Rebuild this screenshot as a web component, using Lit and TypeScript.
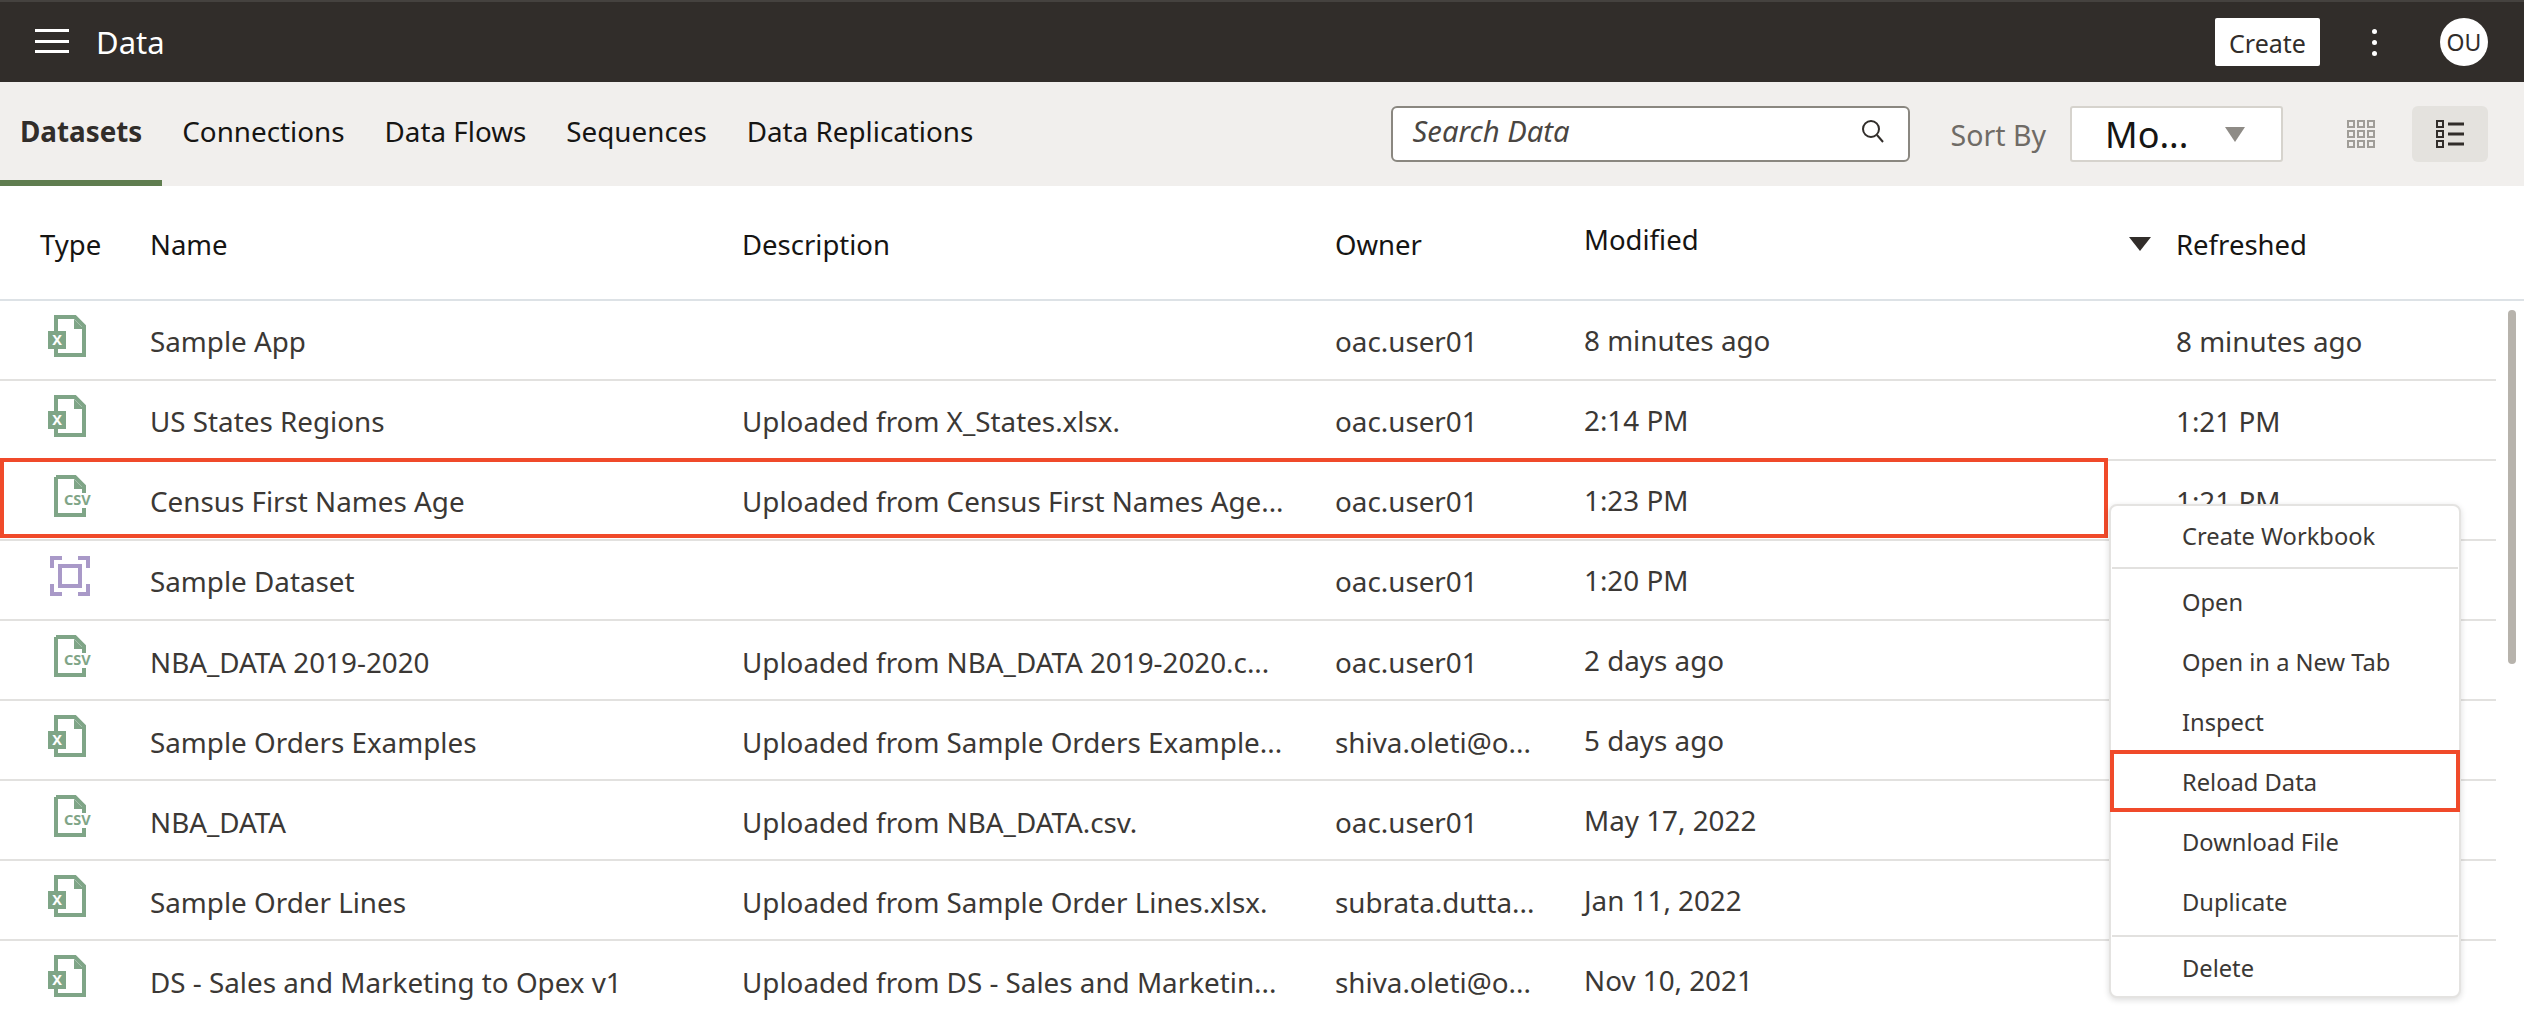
import { LitElement, html, css, svg } from "lit";
import { customElement } from "lit/decorators.js";

type Kind = "xls" | "csv" | "set";

const rows: { kind: Kind; name: string; desc: string; owner: string; modified: string; refreshed: string; marked?: boolean }[] = [
  { kind: "xls", name: "Sample App", desc: "", owner: "oac.user01", modified: "8 minutes ago", refreshed: "8 minutes ago" },
  { kind: "xls", name: "US States Regions", desc: "Uploaded from X_States.xlsx.", owner: "oac.user01", modified: "2:14 PM", refreshed: "1:21 PM" },
  { kind: "csv", name: "Census First Names Age", desc: "Uploaded from Census First Names Age...", owner: "oac.user01", modified: "1:23 PM", refreshed: "1:21 PM", marked: true },
  { kind: "set", name: "Sample Dataset", desc: "", owner: "oac.user01", modified: "1:20 PM", refreshed: "" },
  { kind: "csv", name: "NBA_DATA 2019-2020", desc: "Uploaded from NBA_DATA 2019-2020.c...", owner: "oac.user01", modified: "2 days ago", refreshed: "" },
  { kind: "xls", name: "Sample Orders Examples", desc: "Uploaded from Sample Orders Example...", owner: "shiva.oleti@o...", modified: "5 days ago", refreshed: "" },
  { kind: "csv", name: "NBA_DATA", desc: "Uploaded from NBA_DATA.csv.", owner: "oac.user01", modified: "May 17, 2022", refreshed: "" },
  { kind: "xls", name: "Sample Order Lines", desc: "Uploaded from Sample Order Lines.xlsx.", owner: "subrata.dutta...", modified: "Jan 11, 2022", refreshed: "" },
  { kind: "xls", name: "DS - Sales and Marketing to Opex v1", desc: "Uploaded from DS - Sales and Marketin...", owner: "shiva.oleti@o...", modified: "Nov 10, 2021", refreshed: "" },
];

const GREEN = "#7fa587";
const PURPLE = "#a999c8";

const typeIcon = (kind: Kind) => {
  if (kind === "set") {
    return svg`<svg class="type" viewBox="0 0 44 42" fill="none" stroke="${PURPLE}" stroke-width="4">
      <path d="M14 3H4v10M30 3h10v10M4 29v10h10M40 29v10H30" />
      <rect x="12" y="11" width="20" height="20" />
    </svg>`;
  }
  if (kind === "csv") {
    return svg`<svg class="type" viewBox="0 0 44 42">
      <path d="M8 2h19l9 9v7M36 33v7H8V2" fill="none" stroke="${GREEN}" stroke-width="4" />
      <path d="M26 4l10 10h-10z" fill="${GREEN}" />
      <text x="16" y="30" font-family="Noto Sans, sans-serif" font-size="14.5" font-weight="700" fill="${GREEN}">CSV</text>
    </svg>`;
  }
  return svg`<svg class="type" viewBox="0 0 44 42">
    <path d="M8 2h19l9 9v29H8z" fill="none" stroke="${GREEN}" stroke-width="4" />
    <path d="M26 4l10 10h-10z" fill="${GREEN}" />
    <rect x="0" y="16" width="18" height="18" fill="${GREEN}" />
    <text x="9" y="30" text-anchor="middle" font-family="Noto Sans, sans-serif" font-size="14.5" font-weight="700" fill="#fff">X</text>
  </svg>`;
};

@customElement("app-root")
export class AppRoot extends LitElement {
  static styles = css`
    :host {
      display: block;
      position: relative;
      width: 2524px;
      height: 1018px;
      overflow: hidden;
      background: #fff;
      font-family: "Noto Sans", sans-serif;
      font-size: 27.8px;
      color: #3b3835;
    }
    .topbar {
      box-sizing: border-box;
      height: 82px;
      border-top: 2px solid #45423f;
      background: #312d2a;
      display: flex;
      align-items: center;
      padding: 0 36px 0 35px;
      color: #fff;
    }
    .burger {
      width: 34px;
      height: 24px;
      margin-top: -2px;
      border-top: 3px solid #fff;
      border-bottom: 3px solid #fff;
      box-sizing: border-box;
      position: relative;
    }
    .burger::after {
      content: "";
      position: absolute;
      left: 0;
      right: 0;
      top: 7.5px;
      height: 3px;
      background: #fff;
    }
    .title {
      font-size: 31px;
      margin-left: 27px;
    }
    .create {
      margin-left: auto;
      width: 105px;
      height: 48px;
      background: #fff;
      color: #312d2a;
      border-radius: 2px;
      display: flex;
      align-items: center;
      justify-content: center;
      font-size: 25px;
      padding-top: 2px;
      box-sizing: border-box;
    }
    .kebab {
      width: 6px;
      margin: 0 62px 0 52px;
      display: flex;
      flex-direction: column;
      gap: 6px;
    }
    .kebab i {
      width: 5px;
      height: 5px;
      border-radius: 50%;
      background: #fff;
    }
    .avatar {
      width: 48px;
      height: 48px;
      border-radius: 50%;
      background: #fff;
      color: #312d2a;
      font-size: 23px;
      display: flex;
      align-items: center;
      justify-content: center;
    }
    .tabbar {
      height: 104px;
      background: #f1efed;
      display: flex;
      align-items: stretch;
      padding-right: 36px;
    }
    .tab {
      box-sizing: border-box;
      padding: 0 20px 1px;
      display: flex;
      align-items: center;
      font-size: 27.8px;
      color: #161513;
      border-bottom: 6px solid transparent;
    }
    .tab.active {
      font-weight: 700;
      color: #312d2a;
      border-bottom-color: #5f7d4f;
    }
    .tools {
      margin-left: auto;
      display: flex;
      align-items: center;
    }
    .search {
      box-sizing: border-box;
      width: 519px;
      height: 56px;
      background: #fff;
      border: 2px solid #8a8780;
      border-radius: 6px;
      display: flex;
      align-items: center;
      justify-content: space-between;
      padding: 0 23px 6px 20px;
      font-style: italic;
      font-size: 29.2px;
      color: #4a4642;
    }
    .sortby {
      margin: 2px 24px 0 41px;
      color: #6f6b66;
      font-size: 28.5px;
    }
    .select {
      box-sizing: border-box;
      width: 213px;
      height: 56px;
      background: #fff;
      border: 2px solid #d6d3cd;
      border-radius: 3px;
      display: flex;
      align-items: center;
      padding-left: 33px;
      font-size: 36px;
      color: #161513;
    }
    .select b {
      margin-left: auto;
      margin-right: 36px;
      border-left: 10px solid transparent;
      border-right: 10px solid transparent;
      border-top: 15px solid #8e8b86;
    }
    .toggle {
      width: 76px;
      height: 56px;
      border-radius: 6px;
      display: flex;
      align-items: center;
      justify-content: center;
    }
    .toggle.grid {
      margin-left: 40px;
      margin-right: 13px;
    }
    .toggle.on {
      background: #e4e2de;
    }
    .head,
    .row {
      display: grid;
      grid-template-columns: 150px 592px 593px 249px 592px 1fr;
      align-items: center;
    }
    .head {
      height: 114.6px;
      box-sizing: border-box;
      padding-top: 4px;
      border-bottom: 2px solid #dde2e6;
      color: #161513;
      font-size: 27.5px;
    }
    .head .first {
      padding-left: 40px;
    }
    .head .modified {
      display: flex;
      justify-content: space-between;
      align-items: center;
      padding-right: 25px;
    }
    .head .modified span {
      margin-top: -9px;
    }
    .head .modified b {
      border-left: 11px solid transparent;
      border-right: 11px solid transparent;
      border-top: 14px solid #312d2a;
    }
    .row {
      position: relative;
      width: 2496px;
      height: 80.1px;
      box-sizing: border-box;
      border-bottom: 2px solid #e2e1df;
    }
    .cell {
      white-space: nowrap;
      padding-top: 3px;
    }
    .cell.mod {
      padding-top: 0;
    }
    .icon {
      padding-left: 48px;
      height: 42px;
      margin-top: -8px;
    }
    .type {
      display: block;
      width: 44px;
      height: 42px;
      overflow: visible;
    }
    .row.marked::after {
      content: "";
      position: absolute;
      left: 0;
      top: -3px;
      width: 2108px;
      height: 80px;
      box-sizing: border-box;
      border: 4px solid #f04a2a;
      pointer-events: none;
    }
    .scroll {
      position: absolute;
      left: 2508px;
      top: 310px;
      width: 8px;
      height: 354px;
      border-radius: 4px;
      background: #b7b3ac;
    }
    .menu {
      position: absolute;
      left: 2109px;
      top: 504px;
      width: 352px;
      height: 494px;
      box-sizing: border-box;
      background: #fff;
      border: 2px solid #e4e3e1;
      border-radius: 8px;
      box-shadow: 0 2px 6px rgba(0, 0, 0, 0.14);
      font-size: 23.7px;
    }
    .item {
      height: 60px;
      box-sizing: border-box;
      padding-left: 71px;
      display: flex;
      align-items: center;
      position: relative;
    }
    .sep {
      height: 2px;
      margin: 2px 1px;
      background: #e2e1df;
    }
    .sep.top {
      margin-top: 1px;
      margin-bottom: 3px;
    }
    .sep.low {
      margin-top: 3px;
      margin-bottom: 1px;
    }
    .item.marked::after {
      content: "";
      position: absolute;
      left: -1px;
      right: -1px;
      top: -2px;
      height: 62px;
      box-sizing: border-box;
      border: 4px solid #f04a2a;
    }
  `;

  private row(r: (typeof rows)[number]) {
    return html`<div class="row ${r.marked ? "marked" : ""}">
      <div class="icon">${typeIcon(r.kind)}</div>
      <div class="cell">${r.name}</div>
      <div class="cell">${r.desc}</div>
      <div class="cell">${r.owner}</div>
      <div class="cell mod">${r.modified}</div>
      <div class="cell">${r.refreshed}</div>
    </div>`;
  }

  render() {
    return html`
      <div class="topbar">
        <div class="burger"></div>
        <div class="title">Data</div>
        <div class="create">Create</div>
        <div class="kebab"><i></i><i></i><i></i></div>
        <div class="avatar">OU</div>
      </div>
      <div class="tabbar">
        <div class="tab active">Datasets</div>
        <div class="tab">Connections</div>
        <div class="tab">Data Flows</div>
        <div class="tab">Sequences</div>
        <div class="tab">Data Replications</div>
        <div class="tools">
          <div class="search">
            <span>Search Data</span>
            <svg width="24" height="24" viewBox="0 0 24 24" fill="none" stroke="#312d2a" stroke-width="2">
              <circle cx="10" cy="10" r="8" />
              <path d="M16 16l6 7" />
            </svg>
          </div>
          <div class="sortby">Sort By</div>
          <div class="select"><span>Mo...</span><b></b></div>
          <div class="toggle grid">
            <svg width="28" height="28" viewBox="0 0 28 28" fill="none" stroke="#a09d98" stroke-width="2">
              ${[1, 11, 21].map((y) =>
                [1, 11, 21].map((x) => svg`<rect x="${x}" y="${y}" width="6" height="6" />`)
              )}
            </svg>
          </div>
          <div class="toggle on">
            <svg width="28" height="28" viewBox="0 0 28 28" fill="none" stroke="#312d2a" stroke-width="2">
              ${[1, 11, 21].map(
                (y) => svg`<rect x="1" y="${y}" width="6" height="6" /><path d="M12 ${y + 3}h16" stroke-width="3" />`
              )}
            </svg>
          </div>
        </div>
      </div>
      <div class="head">
        <div class="first">Type</div>
        <div>Name</div>
        <div>Description</div>
        <div>Owner</div>
        <div class="modified"><span>Modified</span><b></b></div>
        <div>Refreshed</div>
      </div>
      ${rows.map((r) => this.row(r))}
      <div class="scroll"></div>
      <div class="menu">
        <div class="item">Create Workbook</div>
        <div class="sep top"></div>
        <div class="item">Open</div>
        <div class="item">Open in a New Tab</div>
        <div class="item">Inspect</div>
        <div class="item marked">Reload Data</div>
        <div class="item">Download File</div>
        <div class="item">Duplicate</div>
        <div class="sep low"></div>
        <div class="item">Delete</div>
      </div>
    `;
  }
}
